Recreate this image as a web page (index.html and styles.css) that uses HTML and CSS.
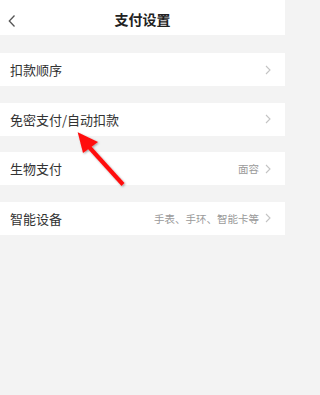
FILE: index.html
```html
<!DOCTYPE html>
<html lang="zh">
<head>
<meta charset="utf-8">
<link rel="stylesheet" href="styles.css">
</head>
<body>
<div class="page">
  <header class="nav">
    <svg class="back" width="10" height="14" viewBox="0 0 10 14"><path d="M6.5 1.5 L1.3 7 L6.5 12.5" fill="none" stroke="#555" stroke-width="1.3"/></svg>
    <div class="title">支付设置</div>
  </header>
  <div class="list">
    <div class="row"><span class="label">扣款顺序</span><span class="right"><svg class="chev" width="6" height="10" viewBox="0 0 6 10"><path d="M1 1 L5 5 L1 9" fill="none" stroke="#c4c4c4" stroke-width="1.1"/></svg></span></div>
    <div class="row"><span class="label">免密支付/自动扣款</span><span class="right"><svg class="chev" width="6" height="10" viewBox="0 0 6 10"><path d="M1 1 L5 5 L1 9" fill="none" stroke="#c4c4c4" stroke-width="1.1"/></svg></span></div>
    <div class="row"><span class="label">生物支付</span><span class="right"><span class="value">面容</span><svg class="chev" width="6" height="10" viewBox="0 0 6 10"><path d="M1 1 L5 5 L1 9" fill="none" stroke="#c4c4c4" stroke-width="1.1"/></svg></span></div>
    <div class="row"><span class="label">智能设备</span><span class="right"><span class="value">手表、手环、智能卡等</span><svg class="chev" width="6" height="10" viewBox="0 0 6 10"><path d="M1 1 L5 5 L1 9" fill="none" stroke="#c4c4c4" stroke-width="1.1"/></svg></span></div>
  </div>
  <svg class="arrow" width="285" height="395" viewBox="0 0 285 395">
    <defs>
      <filter id="sh" x="-20%" y="-20%" width="140%" height="140%">
        <feDropShadow dx="1" dy="1" stdDeviation="1" flood-color="#000" flood-opacity="0.35"/>
      </filter>
    </defs>
    <g filter="url(#sh)" fill="#ff0f0f" stroke="none">
      <path d="M90.5 145.5 L124.5 183 L121.5 186 L87.5 148.5 Z"/>
      <path d="M77.7 132.3 L98 142 L83 153 Z"/>
    </g>
  </svg>
</div>
</body>
</html>
```

FILE: styles.css
```css
* { box-sizing: border-box; }
html, body { margin: 0; padding: 0; }
body {
  background: #f3f3f3;
  font-family: "Noto Sans CJK SC", "Noto Sans", sans-serif;
  color: #333;
}
.page {
  position: relative;
  width: 285px;
  height: 395px;
  overflow: hidden;
}
.nav {
  height: 35px;
  background: #fff;
  display: flex;
  align-items: center;
  justify-content: center;
  position: relative;
}
.back {
  position: absolute;
  left: 8px;
  top: 14px;
}
.title {
  font-size: 14px;
  font-weight: bold;
  color: #222;
  line-height: 1;
  margin-top: 3px;
}
.list {
  display: flex;
  flex-direction: column;
  gap: 16.67px;
  padding-top: 18px;
}
.row {
  height: 33px;
  background: #fff;
  display: flex;
  align-items: center;
  justify-content: space-between;
  padding: 0 14px 0 10px;
}
.label {
  font-size: 13px;
  color: #333;
  line-height: 1;
}
.right {
  display: flex;
  align-items: center;
  gap: 6px;
}
.value {
  font-size: 10.5px;
  color: #9a9a9a;
  line-height: 1;
  margin-top: 1px;
}
.chev { display: block; }
.arrow {
  position: absolute;
  left: 0;
  top: 0;
}
```
